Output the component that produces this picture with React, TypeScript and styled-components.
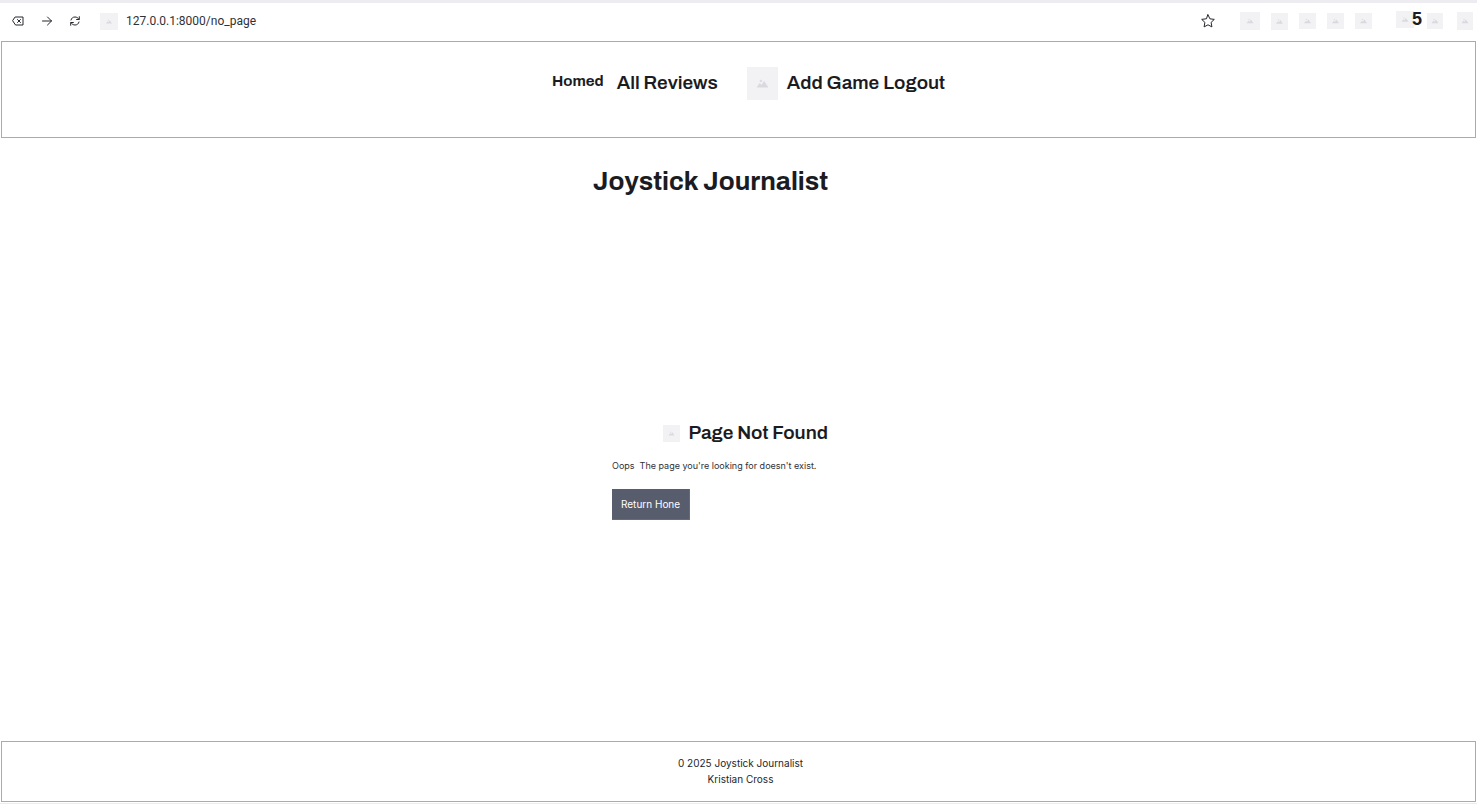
import React from "react";
import styled, { createGlobalStyle } from "styled-components";

const display = `Archivo, "Liberation Sans", sans-serif`;
const body = `Inter, "Liberation Sans", sans-serif`;

const GlobalStyle = createGlobalStyle`
  * { box-sizing: border-box; }
  body { margin: 0; background: #fff; color: #1b1c22; font-family: ${body}; }
  h1, h2, p { margin: 0; }
`;

const Page = styled.div`
  display: flex;
  flex-direction: column;
  min-height: 100vh;
  border-top: 3px solid #ececf1;
  border-bottom: 1px solid #ededef;
`;

const Toolbar = styled.div`
  display: flex;
  align-items: center;
  justify-content: space-between;
  height: 38px;
  padding: 0 4px 2px 12px;
`;

const BrowserControls = styled.div`
  display: flex;
  flex: 1;
  align-items: center;
`;

const IconButton = styled.button<{ $gap?: number }>`
  display: flex;
  padding: 0;
  border: 0;
  background: none;
  color: inherit;
  margin-right: ${(p) => p.$gap ?? 0}px;
`;

const Address = styled.input`
  flex: 1;
  max-width: 600px;
  margin-left: 8px;
  padding: 0;
  border: 0;
  outline: 0;
  background: none;
  color: #303138;
  font: 12px/16px Roboto, ${body};
`;

const Extensions = styled.div`
  display: flex;
  align-items: center;
`;

const ExtensionGroup = styled.div<{ $gap: number }>`
  display: flex;
  align-items: center;
  gap: ${(p) => p.$gap}px;
`;

const Notifications = styled(IconButton)`
  margin: 0 5px 0 24px;
`;

const Tile = styled.svg`
  display: block;
  flex: none;
  background: #f2f2f5;
`;

const Badge = styled.strong`
  margin-left: -2px;
  padding-bottom: 4px;
  font: bold 18px/16px "Liberation Sans", sans-serif;
`;

const Header = styled.header`
  margin: 0 1px;
  padding: 25px 0 37px 20px;
  border: 1px solid #a9abb2;
`;

const Nav = styled.nav`
  display: flex;
  align-items: center;
  justify-content: center;
  height: 33px;
`;

const NavLink = styled.a<{ $small?: boolean; $gap?: number }>`
  margin-right: ${(p) => p.$gap ?? 0}px;
  padding-bottom: ${(p) => (p.$small ? 6 : 2)}px;
  color: #1b1c22;
  font: ${(p) => (p.$small ? "700 15px" : "650 19px")}/24px ${display};
  text-decoration: none;
`;

const NavTile = styled.span`
  margin-right: 9px;
`;

const Title = styled.h1`
  padding: 28px 56px 0 0;
  font: 700 26px/30px ${display};
  text-align: center;
`;

const Main = styled.main`
  display: flex;
  flex: 1;
  align-items: center;
  justify-content: center;
  padding: 5px 37px 0 0;
`;

const Message = styled.section`
  display: flex;
  flex-direction: column;
  align-items: flex-start;
  min-width: 216px;
`;

const Heading = styled.h2`
  display: flex;
  align-items: center;
  align-self: flex-end;
  gap: 8px;
  font: 650 19px/22px ${display};
`;

const Text = styled.p`
  padding: 14px 0 15px;
  color: #303138;
  font-size: 9px;
  line-height: 16px;
  white-space: pre;
`;

const HomeButton = styled.button`
  height: 31px;
  padding: 0 9px;
  border: 1px solid #666b7b;
  border-width: 0 1px 1px 0;
  background: #575d6c;
  color: #fff;
  font: 10px/16px ${body};
`;

const Footer = styled.footer`
  margin: 0 1px 1px;
  padding: 13px 0 14px 4px;
  border: 1px solid #a9abb2;
  color: #25262c;
  font-size: 10px;
  line-height: 16px;
  text-align: center;
`;

function Placeholder({ width = 17, height = 17, glyph = 7 }: { width?: number; height?: number; glyph?: number }) {
  return (
    <Tile width={width} height={height} aria-hidden="true">
      <svg x={(width - glyph) / 2} y={(height - glyph) / 2} width={glyph} height={glyph} viewBox="0 0 12 12">
        <path d="M0 10 3.2 5.4 5 7.4 7.6 3.4 12 10ZM4.4 2 5.8 3.4 4.4 4.8 3 3.4Z" fill="#d9dade" />
      </svg>
    </Tile>
  );
}

const stroke = { fill: "none", stroke: "#25262c", strokeLinecap: "round", strokeLinejoin: "round" } as const;

export default function App() {
  return (
    <>
      <GlobalStyle />
      <Page>
        <Toolbar>
          <BrowserControls>
            <IconButton $gap={18} aria-label="Back">
              <svg width="12" height="10" viewBox="0 0 12 10" {...stroke}>
                <path d="M3.5 1H11v8H3.5L.8 5ZM5.500 3.500l3 3m0-3-3 3" />
              </svg>
            </IconButton>
            <IconButton $gap={18} aria-label="Forward">
              <svg width="10" height="10" viewBox="0 0 10 10" {...stroke}>
                <path d="M.5 5h9M5.500 1 9.500 5 5.500 9" />
              </svg>
            </IconButton>
            <IconButton $gap={20} aria-label="Reload">
              <svg width="10" height="10" viewBox="0 0 10 10" {...stroke}>
                <path d="M1 4C1.5 2 3 1 5 1c1.700 0 3 .8 4 2.300M9.300.7v2.800H6.600M9 6C8.500 8 7 9 5 9 3.300 9 2 8.200 1 6.700M.7 9.300V6.500h2.700" />
              </svg>
            </IconButton>
            <Placeholder width={18} glyph={6} />
            <Address aria-label="Address" defaultValue="127.0.0.1:8000/no_page" />
          </BrowserControls>
          <Extensions>
            <IconButton $gap={25} aria-label="Bookmark this page">
              <svg width="14" height="14" viewBox="0 0 14 14" {...stroke}>
                <path d="m7 .8 1.900 4 4.400.6-3.200 3 .8 4.500L7 10.800l-3.900 2.100.8-4.500-3.200-3 4.400-.6Z" />
              </svg>
            </IconButton>
            <ExtensionGroup $gap={11}>
              <Placeholder width={20} height={18} />
              <Placeholder />
              <Placeholder height={16} />
              <Placeholder height={16} />
              <Placeholder height={16} />
            </ExtensionGroup>
            <Notifications aria-label="5 notifications">
              <Placeholder width={18} />
              <Badge>5</Badge>
            </Notifications>
            <ExtensionGroup $gap={14}>
              <Placeholder width={16} height={16} />
              <Placeholder width={16} height={18} />
            </ExtensionGroup>
          </Extensions>
        </Toolbar>
        <Header>
          <Nav aria-label="Main">
            <NavLink href="#home" $small $gap={13}>Homed</NavLink>
            <NavLink href="#reviews" $gap={29}>All Reviews</NavLink>
            <NavTile>
              <Placeholder width={31} height={33} glyph={12} />
            </NavTile>
            <NavLink href="#add" $gap={4}>Add Game</NavLink>
            <NavLink href="#logout">Logout</NavLink>
          </Nav>
        </Header>
        <Title>Joystick Journalist</Title>
        <Main>
          <Message>
            <Heading>
              <Placeholder glyph={6} />
              Page Not Found
            </Heading>
            <Text>{"Oops  The page you're looking for doesn't exist."}</Text>
            <HomeButton>Return Hone</HomeButton>
          </Message>
        </Main>
        <Footer>
          <p>0 2025 Joystick Journalist</p>
          <p>Kristian Cross</p>
        </Footer>
      </Page>
    </>
  );
}
